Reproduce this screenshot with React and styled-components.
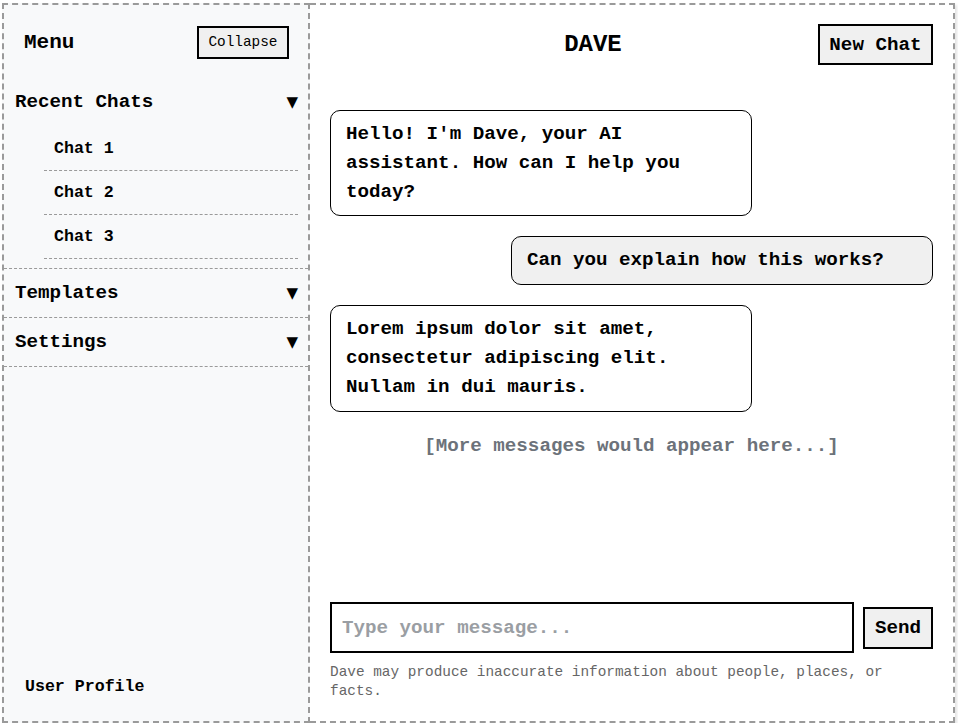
import React from "react";
import styled, { createGlobalStyle } from "styled-components";

const GlobalStyle = createGlobalStyle`
  html, body {
    margin: 0;
    padding: 0;
    background: #ffffff;
  }
  body {
    font-family: "Liberation Mono", "Courier New", monospace;
    color: #000;
  }
  * { box-sizing: border-box; }
`;

const Frame = styled.div`
  display: flex;
  height: 720px;
  margin: 3px 3px 0 2px;
  box-shadow: 2px 2px 3px rgba(0, 0, 0, 0.12);
`;

const Sidebar = styled.aside`
  width: 308px;
  flex-shrink: 0;
  display: flex;
  flex-direction: column;
  background: #f8f9fa;
  border: 2px dashed #9a9a9a;
`;

const SidebarHeader = styled.div`
  display: flex;
  align-items: center;
  justify-content: space-between;
  padding: 21px 19px 19px 20px;
`;

const MenuTitle = styled.h2`
  margin: 0;
  font-size: 21px;
  line-height: 24px;
  font-weight: bold;
`;

const SmallButton = styled.button`
  font-family: inherit;
  font-size: 14.4px;
  line-height: 17px;
  font-weight: normal;
  color: #000;
  background: #f0f0f0;
  border: 2px solid #000;
  border-radius: 0;
  padding: 6px 9.5px;
  cursor: pointer;
`;

const Section = styled.div`
  border-bottom: 1px dashed #9a9a9a;
`;

const SectionHeader = styled.div`
  display: flex;
  align-items: center;
  justify-content: space-between;
  height: 48px;
  padding: 0 10px 0 11px;
  font-size: 19.2px;
  font-weight: bold;
`;

const Arrow = styled.span`
  font-family: "DejaVu Sans", sans-serif;
  font-size: 15px;
`;

const ChatList = styled.div`
  margin: 0 10px 0 40px;
  padding: 1px 0 9px;
`;

const ChatItem = styled.div`
  padding: 12px 10px;
  font-size: 16.6px;
  line-height: 19px;
  font-weight: bold;
  border-bottom: 1px dashed #9a9a9a;
`;

const Grow = styled.div`
  flex: 1;
`;

const SidebarFooter = styled.div`
  padding: 0 21px 25px;
  font-size: 16.6px;
  line-height: 19px;
  font-weight: bold;
`;

const Main = styled.main`
  flex: 1;
  min-width: 0;
  display: flex;
  flex-direction: column;
  background: #ffffff;
  border: 2px dashed #9a9a9a;
  border-left: none;
  padding: 19px 20px 20px;
`;

const Header = styled.header`
  display: flex;
  align-items: center;
  justify-content: space-between;
  margin-bottom: 45px;
`;

const HeaderSpacer = styled.div`
  width: 38px;
`;

const Title = styled.h1`
  margin: 0;
  font-size: 24px;
  line-height: 28px;
  font-weight: bold;
`;

const BigButton = styled.button`
  font-family: inherit;
  font-size: 19.2px;
  font-weight: bold;
  color: #000;
  background: #f0f0f0;
  border: 2px solid #000;
  border-radius: 0;
  height: ${(p) => p.$h}px;
  padding: 0 ${(p) => p.$px}px;
  cursor: pointer;
`;

const Messages = styled.div`
  flex: 1;
  display: flex;
  flex-direction: column;
  gap: 20px;
  overflow: hidden;
`;

const Bubble = styled.div`
  width: 70%;
  align-self: ${(p) => (p.$user ? "flex-end" : "flex-start")};
  background: ${(p) => (p.$user ? "#f0f0f0" : "#ffffff")};
  border: 1px solid #000;
  border-radius: 10px;
  padding: 9px 15px;
  font-size: 19.2px;
  line-height: 28.8px;
  font-weight: bold;
`;

const MoreNote = styled.div`
  text-align: center;
  color: #6c727a;
  font-size: 19.2px;
  line-height: 28.8px;
  font-weight: bold;
`;

const InputRow = styled.div`
  display: flex;
  align-items: center;
  gap: 9px;
`;

const MessageInput = styled.input`
  flex: 1;
  min-width: 0;
  height: 51px;
  border: 2px solid #000;
  border-radius: 0;
  padding: 0 10px;
  font-family: inherit;
  font-size: 19.2px;
  font-weight: bold;
  color: #000;
  outline: none;
  &::placeholder {
    color: #9a9ea3;
  }
`;

const Disclaimer = styled.p`
  margin: 10px 0 0;
  font-size: 14.4px;
  line-height: 19px;
  color: #666;
`;

export default function App() {
  return (
    <>
      <GlobalStyle />
      <Frame>
        <Sidebar>
          <SidebarHeader>
            <MenuTitle>Menu</MenuTitle>
            <SmallButton>Collapse</SmallButton>
          </SidebarHeader>
          <Section>
            <SectionHeader>
              <span>Recent Chats</span>
              <Arrow>▼</Arrow>
            </SectionHeader>
            <ChatList>
              <ChatItem>Chat 1</ChatItem>
              <ChatItem>Chat 2</ChatItem>
              <ChatItem>Chat 3</ChatItem>
            </ChatList>
          </Section>
          <Section>
            <SectionHeader>
              <span>Templates</span>
              <Arrow>▼</Arrow>
            </SectionHeader>
          </Section>
          <Section>
            <SectionHeader>
              <span>Settings</span>
              <Arrow>▼</Arrow>
            </SectionHeader>
          </Section>
          <Grow />
          <SidebarFooter>User Profile</SidebarFooter>
        </Sidebar>
        <Main>
          <Header>
            <HeaderSpacer />
            <Title>DAVE</Title>
            <BigButton $h={41} $px={9.5}>New Chat</BigButton>
          </Header>
          <Messages>
            <Bubble>Hello! I'm Dave, your AI assistant. How can I help you today?</Bubble>
            <Bubble $user>Can you explain how this works?</Bubble>
            <Bubble>Lorem ipsum dolor sit amet, consectetur adipiscing elit. Nullam in dui mauris.</Bubble>
            <MoreNote>[More messages would appear here...]</MoreNote>
          </Messages>
          <InputRow>
            <MessageInput placeholder="Type your message..." />
            <BigButton $h={42} $px={10}>Send</BigButton>
          </InputRow>
          <Disclaimer>
            Dave may produce inaccurate information about people, places, or facts.
          </Disclaimer>
        </Main>
      </Frame>
    </>
  );
}
